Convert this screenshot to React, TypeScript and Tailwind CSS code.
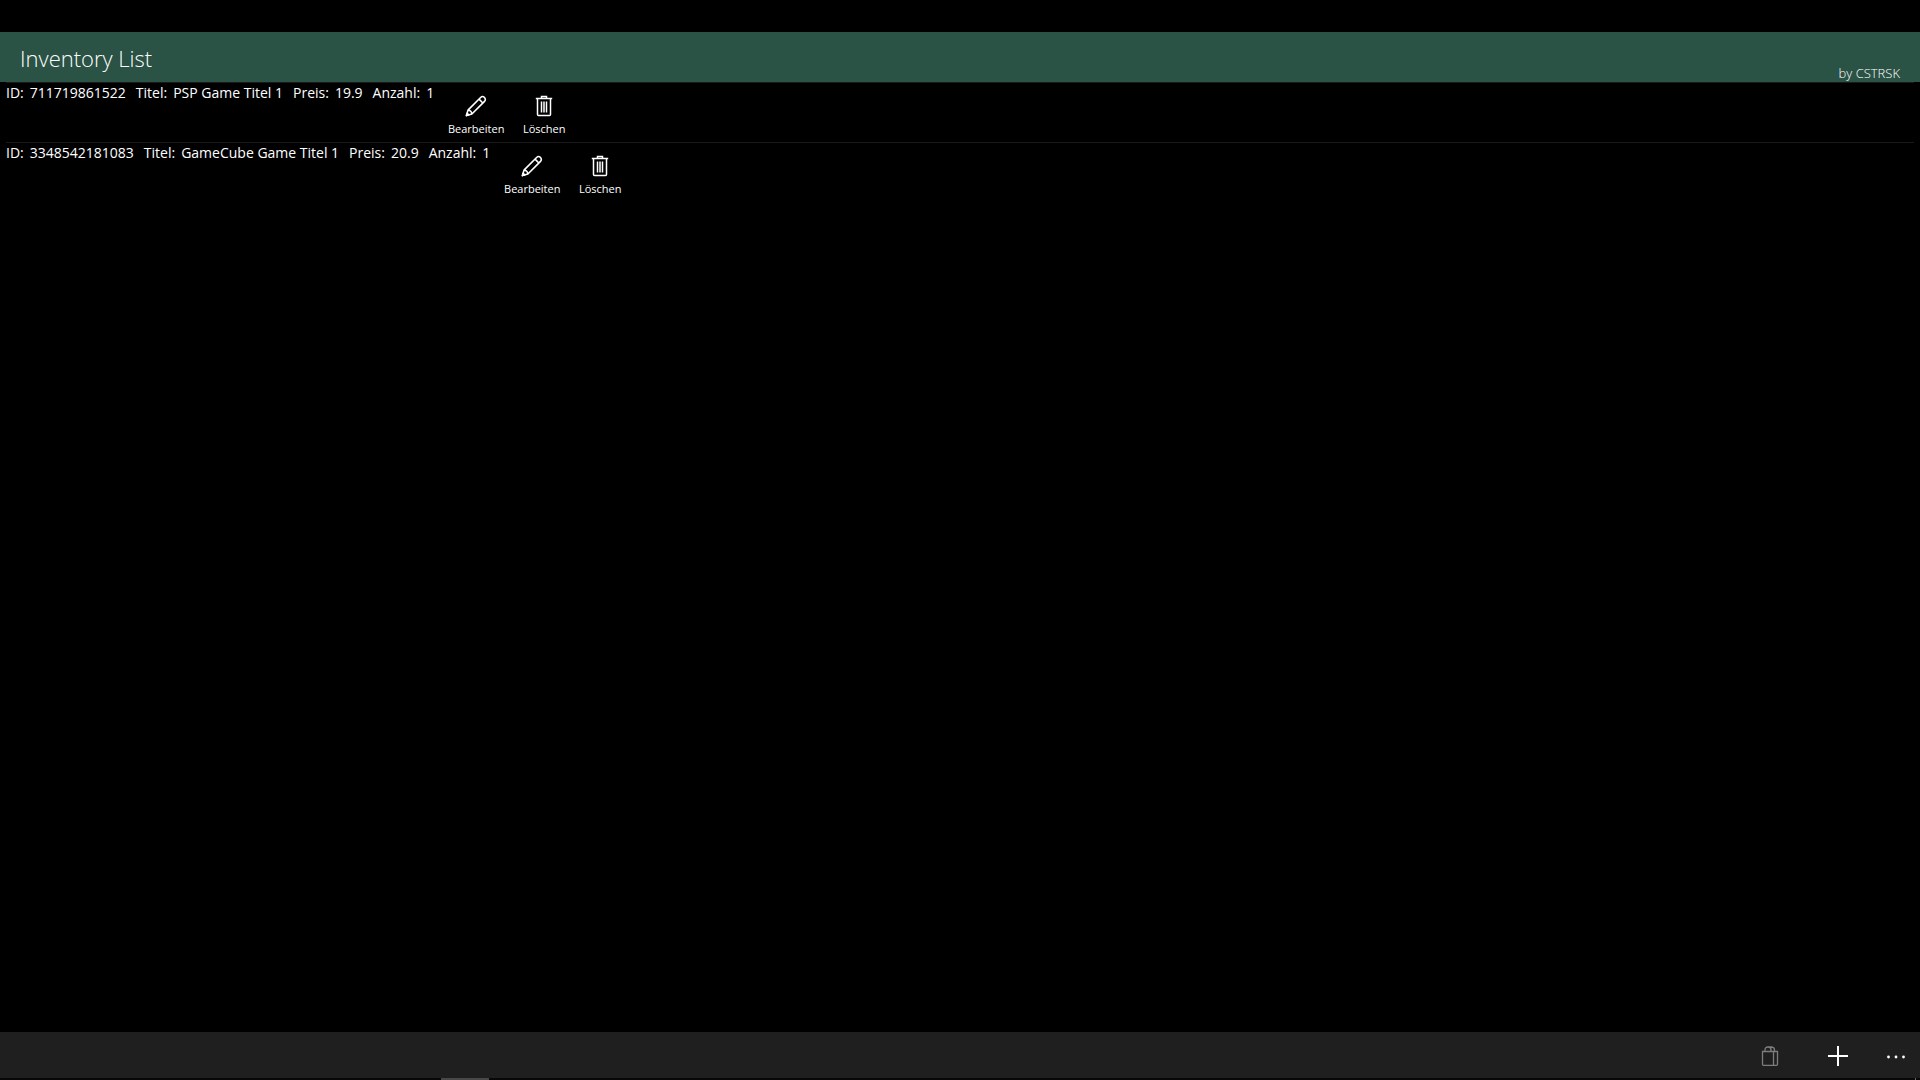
type Item = { id: string; title: string; price: string; count: number };

const items: Item[] = [
  { id: "711719861522", title: "PSP Game Titel 1", price: "19.9", count: 1 },
  { id: "3348542181083", title: "GameCube Game Titel 1", price: "20.9", count: 1 },
];

function PencilIcon() {
  return (
    <svg width="22" height="22" viewBox="0 0 22 22" fill="none" stroke="currentColor" strokeWidth="1.6" strokeLinejoin="round" aria-hidden="true">
      <path d="M1.4 20.6 L3 15.1 L15.6 2.5 C16.7 1.4 18.4 1.4 19.5 2.5 C20.6 3.6 20.6 5.3 19.5 6.4 L6.9 19 Z" />
      <path d="M14 4.1 L17.9 8 M3 15.1 C5 15.1 6.9 17 6.9 19" />
      <path d="M1.4 20.6 L2.1 18.2 L3.8 19.9 Z" fill="currentColor" />
    </svg>
  );
}

function TrashIcon() {
  return (
    <svg width="18" height="22" viewBox="0 0 18 22" fill="none" stroke="currentColor" strokeWidth="1.5" aria-hidden="true">
      <path d="M0.8 3.5 H17.2 M6.5 3.5 V1.5 H11.5 V3.5 M2.5 3.5 V19.5 Q2.5 20.5 3.5 20.5 H14.5 Q15.5 20.5 15.5 19.5 V3.5" />
      <path d="M6.5 6.5 V17.5 M9 6.5 V17.5 M11.5 6.5 V17.5" />
    </svg>
  );
}

function BagsIcon() {
  return (
    <svg width="18" height="20" viewBox="0 0 18 20" fill="none" stroke="currentColor" strokeWidth="1.3" aria-hidden="true">
      <path d="M1.5 5.5 H12.5 V19.3 H2.5 Q1.5 19.3 1.5 18.3 Z" />
      <path d="M12.5 5.5 H16.5 V18.3 Q16.5 19.3 15.5 19.3 H12.5" />
      <path d="M4 5.5 V4 Q4 1 7 1 Q10 1 10 4 V5.5 M7 1 H10 Q13.5 1 13.5 4 V5.5" />
    </svg>
  );
}

function Field({ label, value }: { label: string; value: string | number }) {
  return (
    <div className="flex gap-[6px]">
      <dt>{label}</dt>
      <dd>{value}</dd>
    </div>
  );
}

function Row({ item }: { item: Item }) {
  return (
    <li className="flex h-15 items-start border-t border-[#191919]">
      <dl className="flex gap-[10px] text-[14px] leading-5 whitespace-nowrap">
        <Field label="ID:" value={item.id} />
        <Field label="Titel:" value={item.title} />
        <Field label="Preis:" value={item.price} />
        <Field label="Anzahl:" value={item.count} />
      </dl>
      <div className="ml-2 flex pt-3">
        <button type="button" className="flex w-17 flex-col items-center gap-1 text-[11px] leading-4">
          <PencilIcon />
          Bearbeiten
        </button>
        <button type="button" className="flex w-17 flex-col items-center gap-1 text-[11px] leading-4">
          <TrashIcon />
          Löschen
        </button>
      </div>
    </li>
  );
}

export default function App() {
  return (
    <div className="flex min-h-screen flex-col bg-black pt-8 font-['Open_Sans','Noto_Sans',sans-serif] text-white">
      <header className="flex h-[50px] items-end justify-between bg-[#2a5245] px-5">
        <h1 className="pb-2 text-[22px] leading-8 font-light">Inventory List</h1>
        <p className="text-[13px] leading-[18px] font-light">by CSTRSK</p>
      </header>
      <main className="flex-1 px-[6px]">
        <ul>
          {items.map((item) => (
            <Row key={item.id} item={item} />
          ))}
        </ul>
      </main>
      <footer>
        <div className="flex h-[46px] items-center justify-end bg-[#1f1f1f]">
          <button type="button" disabled aria-label="Einkauf" className="flex h-full w-17 items-center justify-center pt-[2px] text-[#7d7d7d]">
            <BagsIcon />
          </button>
          <button type="button" aria-label="Hinzufügen" className="flex h-full w-17 items-center justify-center pt-[2px]">
            <svg width="20" height="20" viewBox="0 0 20 20" stroke="currentColor" strokeWidth="2" aria-hidden="true">
              <path d="M10 0 V20 M0 10 H20" />
            </svg>
          </button>
          <button type="button" aria-label="Mehr anzeigen" className="flex h-full w-12 items-center justify-center pt-1">
            <svg width="18" height="4" viewBox="0 0 18 4" fill="currentColor" aria-hidden="true">
              <circle cx="1.5" cy="2" r="1.4" />
              <circle cx="9" cy="2" r="1.4" />
              <circle cx="16.5" cy="2" r="1.4" />
            </svg>
          </button>
        </div>
        <div className="flex h-[2px] justify-between bg-[#080808] pr-1 pl-[441px]">
          <span className="w-12 bg-[#484848]" />
          <span className="w-px bg-[#666666]" />
        </div>
      </footer>
    </div>
  );
}
